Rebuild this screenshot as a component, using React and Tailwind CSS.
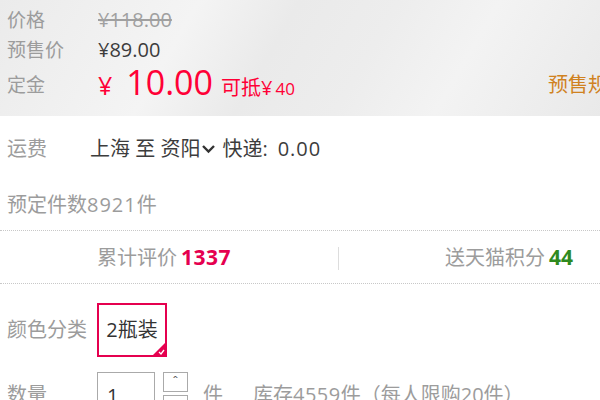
import React from "react";

const F = { fontFamily: '"Open Sans", "Noto Sans CJK SC", sans-serif' };

export default function App() {
  return (
    <div className="w-[600px] h-[400px] overflow-hidden bg-white text-[#333] leading-normal" style={F}>
      {/* price panel */}
      <div className="h-[116px] bg-[linear-gradient(120deg,#ebebeb_0%,#f4f4f4_30%,#eaeaea_45%,#ededed_60%,#f3f3f3_75%,#e9e9e9_100%)] flex flex-col">
        <div className="h-[38px] flex items-center pt-[2px]">
          <div className="w-[98px] pl-[7px] text-[19px] text-[#9c9c9c]">价格</div>
          <div className="text-[20px] text-[#a0a0a0] line-through">¥118.00</div>
        </div>
        <div className="h-[24px] flex items-center">
          <div className="w-[98px] pl-[7px] text-[19px] text-[#9c9c9c]">预售价</div>
          <div className="text-[20px] text-[#3c3c3c]">¥89.00</div>
        </div>
        <div className="h-[46px] flex items-center">
          <div className="w-[98px] pl-[7px] text-[19px] text-[#9c9c9c]">定金</div>
          <div className="flex items-baseline text-[#ff0036]">
            <span className="text-[25px] mr-[14px]">¥</span>
            <span className="text-[34px] leading-none">10.00</span>
            <span className="text-[20px] ml-[8px]">可抵¥</span>
            <span className="text-[17px] ml-[3px]">40</span>
          </div>
          <div className="ml-auto w-[52px] overflow-hidden whitespace-nowrap text-[20px] text-[#d0821f]">预售规则</div>
        </div>
      </div>

      {/* shipping */}
      <div className="h-[64px] flex items-center pt-[2px]">
        <div className="w-[90px] pl-[7px] text-[20px] text-[#9c9c9c]">运费</div>
        <div className="flex items-center text-[20px] text-[#3c3c3c]">
          <span>上海 至 资阳</span>
          <svg width="15" height="10" viewBox="0 0 15 10" className="ml-[1px] mr-[6px]">
            <path d="M2 2 L7.5 7.5 L13 2" fill="none" stroke="#333" strokeWidth="2.4" />
          </svg>
          <span>快递:</span>
          <span className="ml-[10px] tracking-[1px]">0.00</span>
        </div>
      </div>

      <div className="h-[50px] flex items-center pl-[7px] text-[20px] text-[#9c9c9c]">
        预定件数<span className="tracking-[1px]">8921</span>件
      </div>

      {/* stats */}
      <div className="border-t border-dotted border-[#c8c8c8] h-[53px] flex items-center pt-[2px]">
        <div className="w-[338px] flex items-baseline pl-[97px]">
          <span className="text-[20px] text-[#9c9c9c]">累计评价</span>
          <span className="text-[21px] font-bold text-[#e5004f] ml-[4px] tracking-[0.5px]">1337</span>
        </div>
        <div className="w-[1px] h-[23px] bg-[#ddd]"></div>
        <div className="flex-1 flex items-baseline justify-end pr-[27px]">
          <span className="text-[20px] text-[#9c9c9c]">送天猫积分</span>
          <span className="text-[21px] font-bold text-[#2f8a1f] ml-[4px]">44</span>
        </div>
      </div>

      {/* sku */}
      <div className="border-t border-dotted border-[#c8c8c8] pt-[19px] flex items-center">
        <div className="w-[97px] pl-[7px] text-[20px] text-[#9c9c9c]">颜色分类</div>
        <div className="relative w-[70px] h-[54px] border-2 border-[#e5004f] flex items-center justify-center text-[20px] text-[#333]">
          2瓶装
          <div className="absolute right-0 bottom-0 w-0 h-0 border-l-[12px] border-l-transparent border-b-[12px] border-b-[#e5004f]"></div>
          <svg className="absolute right-[0px] bottom-[0px]" width="7" height="6" viewBox="0 0 7 6">
            <path d="M1 3 L3 5 L6 1" fill="none" stroke="#fff" strokeWidth="1.3" />
          </svg>
        </div>
      </div>

      {/* quantity */}
      <div className="mt-[15px] flex items-start">
        <div className="w-[97px] pl-[7px] pt-[8px] text-[20px] text-[#9c9c9c]">数量</div>
        <div className="w-[58px] h-[40px] border border-[#aaa] pl-[9px] pt-[8px] text-[20px] text-[#333]">1</div>
        <div className="ml-[8px] flex flex-col gap-[3px]">
          <div className="w-[25px] h-[20px] border border-[#aaa] flex items-start justify-center text-[13px] leading-[16px] text-[#555]">ˆ</div>
          <div className="w-[25px] h-[20px] border border-[#aaa]"></div>
        </div>
        <div className="ml-[15px] pt-[8px] text-[20px] text-[#9c9c9c]">件</div>
        <div className="ml-[30px] pt-[8px] text-[20px] text-[#9c9c9c]">库存<span className="tracking-[0.5px]">4559</span>件（每人限购20件）</div>
      </div>
    </div>
  );
}
